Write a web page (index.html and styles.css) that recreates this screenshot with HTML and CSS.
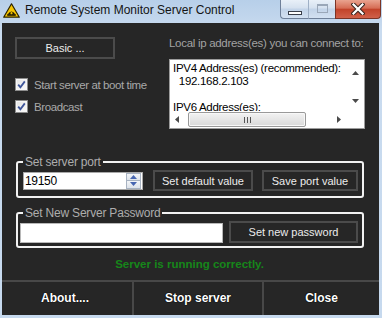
FILE: index.html
```html
<!DOCTYPE html>
<html>
<head>
<meta charset="utf-8">
<title>Remote System Monitor Server Control</title>
<link rel="stylesheet" href="styles.css">
</head>
<body>
<div class="window">
  <div class="titlebar">
    <svg class="app-icon" width="17" height="15" viewBox="0 0 17 15">
      <path d="M8.5 0.8 L16.3 14.2 L0.7 14.2 Z" fill="#f6c500" stroke="#2b2400" stroke-width="1.2" stroke-linejoin="round"/>
      <path d="M4.6 11.6 Q8.5 5.4 12.4 11.6 Z" fill="#1f1a00"/>
      <rect x="4.2" y="11.2" width="8.6" height="1.6" fill="#1f1a00"/>
      <circle cx="8.5" cy="10.2" r="1.1" fill="#f6c500"/>
    </svg>
    <span class="title">Remote System Monitor Server Control</span>
    <div class="caption">
      <div class="cbtn cmin"><span class="min-glyph"></span></div>
      <div class="cbtn cmax"><span class="max-glyph"></span></div>
      <div class="cbtn cclose">
        <svg width="14" height="12" viewBox="0 0 14 12">
          <path d="M2.5 1.5 L11.5 10.5 M11.5 1.5 L2.5 10.5" stroke="#3a2620" stroke-width="4.2" stroke-linecap="square"/>
          <path d="M2.5 1.5 L11.5 10.5 M11.5 1.5 L2.5 10.5" stroke="#ffffff" stroke-width="2.2" stroke-linecap="square"/>
        </svg>
      </div>
    </div>
  </div>
  <div class="client">
    <div class="top">
      <div class="left-col">
        <button class="btn btn-basic">Basic ...</button>
        <label class="check">
          <span class="box"><svg width="9" height="9" viewBox="0 0 9 9"><path d="M1.2 4.6 L3.4 7.2 L7.8 1.4" fill="none" stroke="#3e559a" stroke-width="1.8"/></svg></span>
          <span class="check-text">Start server at boot time</span>
        </label>
        <label class="check">
          <span class="box"><svg width="9" height="9" viewBox="0 0 9 9"><path d="M1.2 4.6 L3.4 7.2 L7.8 1.4" fill="none" stroke="#3e559a" stroke-width="1.8"/></svg></span>
          <span class="check-text">Broadcast</span>
        </label>
      </div>
      <div class="right-col">
        <div class="ip-label">Local ip address(es) you can connect to:</div>
        <div class="listbox">
          <div class="list-content">IPV4 Address(es) (recommended):
  192.168.2.103

IPV6 Address(es):</div>
          <div class="vscroll">
            <svg width="7" height="4" viewBox="0 0 7 4"><path d="M3.5 0 L7 4 L0 4 Z" fill="#4a4a4a"/></svg>
            <svg width="7" height="4" viewBox="0 0 7 4"><path d="M0 0 L7 0 L3.5 4 Z" fill="#4a4a4a"/></svg>
          </div>
          <div class="hscroll">
            <svg width="4" height="7" viewBox="0 0 4 7"><path d="M4 0 L4 7 L0 3.5 Z" fill="#4a4a4a"/></svg>
            <div class="thumb"><span class="grip"></span></div>
            <svg width="4" height="7" viewBox="0 0 4 7"><path d="M0 0 L4 3.5 L0 7 Z" fill="#4a4a4a"/></svg>
          </div>
          <div class="corner"></div>
        </div>
      </div>
    </div>

    <fieldset class="group group-port">
      <legend>Set server port</legend>
      <div class="row row-port">
        <div class="numeric">
          <span class="num-value">19150</span>
          <div class="spin">
            <span class="spin-btn"><svg width="7" height="4" viewBox="0 0 7 4"><path d="M3.5 0 L7 4 L0 4 Z" fill="#4766b0"/></svg></span>
            <span class="spin-btn"><svg width="7" height="4" viewBox="0 0 7 4"><path d="M0 0 L7 0 L3.5 4 Z" fill="#4766b0"/></svg></span>
          </div>
        </div>
        <button class="btn btn-default">Set default value</button>
        <button class="btn btn-save">Save port value</button>
      </div>
    </fieldset>

    <fieldset class="group group-pass">
      <legend>Set New Server Password</legend>
      <div class="row row-pass">
        <div class="textbox"></div>
        <button class="btn btn-pass">Set new password</button>
      </div>
    </fieldset>

    <div class="status">Server is running correctly.</div>

    <div class="bottombar">
      <button class="bbtn bbtn-about">About....</button>
      <button class="bbtn bbtn-stop">Stop server</button>
      <button class="bbtn bbtn-close">Close</button>
    </div>
  </div>
</div>
</body>
</html>
```

FILE: styles.css
```css
* { box-sizing: border-box; }

html, body {
  margin: 0;
  padding: 0;
}

body {
  width: 382px;
  height: 318px;
  overflow: hidden;
  font-family: "Liberation Sans", Arial, sans-serif;
  font-size: 11px;
}

.window {
  width: 382px;
  height: 318px;
  display: flex;
  flex-direction: column;
  background: linear-gradient(180deg, #b7cfe9 0px, #c9dbef 30px, #c6d9ee 100%);
  padding: 0 3px 3px 2px;
}

/* ---------- title bar ---------- */
.titlebar {
  height: 23px;
  display: flex;
  align-items: flex-start;
  margin-right: -2px;
  flex-shrink: 0;
}

.app-icon {
  margin: 3px 0 0 1px;
  flex-shrink: 0;
}

.title {
  margin: 3px 0 0 5px;
  font-size: 12px;
  line-height: 15px;
  color: #141414;
  flex: 1;
  white-space: nowrap;
}

.caption {
  display: flex;
  height: 19px;
}

.cbtn {
  height: 19px;
  display: flex;
  align-items: center;
  justify-content: center;
  border: 1px solid #6f8099;
  border-top: none;
}

.cmin {
  width: 28px;
  border-radius: 0 0 0 4px;
  border-right: none;
  background: linear-gradient(180deg, #e9f0f8 0%, #d5e1ef 45%, #c2d3e8 50%, #d3e1f1 100%);
  align-items: flex-end;
  padding-bottom: 3px;
}

.min-glyph {
  width: 14px;
  height: 4px;
  background: #ffffff;
  border: 1px solid #3a3f4a;
}

.cmax {
  width: 27px;
  border-right: none;
  background: linear-gradient(180deg, #e9f0f8 0%, #d5e1ef 45%, #c2d3e8 50%, #d3e1f1 100%);
  border-left: 1px solid #9fb0c6;
}

.max-glyph {
  width: 11px;
  height: 9px;
  border: 1px solid #9aa7b8;
  border-top-width: 2px;
  background: transparent;
  margin-top: -2px;
}

.cclose {
  width: 46px;
  border-radius: 0 0 4px 0;
  background: linear-gradient(180deg, #e9a38f 0%, #d66d55 45%, #c2432a 52%, #d0614a 100%);
  border-color: #7b3426;
}

/* ---------- client area ---------- */
.client {
  flex: 1;
  background: #262626;
  display: flex;
  flex-direction: column;
  color: #e6e6e6;
}

.top {
  display: flex;
  padding: 14px 0 0 13px;
}

.left-col {
  width: 154px;
  display: flex;
  flex-direction: column;
}

.btn {
  font-family: "Liberation Sans", Arial, sans-serif;
  font-size: 11px;
  color: #ececec;
  background: #262626;
  border: 2px solid #4b4b4b;
  padding: 0;
  margin: 0;
  display: flex;
  align-items: center;
  justify-content: center;
}

.btn-basic {
  width: 100px;
  height: 22px;
  margin-bottom: 19px;
}

.check {
  display: flex;
  align-items: center;
  height: 13px;
  margin-bottom: 9px;
}

.box {
  width: 13px;
  height: 13px;
  border: 1px solid #8d8d8d;
  background: linear-gradient(135deg, #e4e4e4 0%, #fbfbfb 100%);
  display: flex;
  align-items: center;
  justify-content: center;
  box-shadow: inset 0 0 0 1px #f6f6f6;
  flex-shrink: 0;
}

.check-text {
  margin-left: 6px;
  color: #a9a9a9;
  font-size: 11.5px;
  letter-spacing: -0.4px;
  white-space: nowrap;
}

.right-col {
  width: 196px;
  display: flex;
  flex-direction: column;
}

.ip-label {
  line-height: 13px;
  color: #a3a3a3;
  white-space: nowrap;
  font-size: 11.5px;
  letter-spacing: -0.3px;
}

.listbox {
  margin-top: 9px;
  height: 70px;
  border: 1px solid #9c9c9c;
  background: #ffffff;
  display: grid;
  grid-template-columns: 1fr 17px;
  grid-template-rows: 1fr 17px;
  overflow: hidden;
}

.list-content {
  white-space: pre;
  color: #000000;
  line-height: 13px;
  padding: 2px 0 0 3px;
  overflow: hidden;
  font-size: 11.5px;
  letter-spacing: -0.3px;
}

.vscroll {
  display: flex;
  flex-direction: column;
  align-items: center;
  justify-content: space-between;
  padding: 11px 0 8px 0;
}

.hscroll {
  display: flex;
  align-items: center;
  padding: 0 6px 0 5px;
  background: #ffffff;
}

.thumb {
  margin-left: 9px;
  width: 118px;
  height: 15px;
  border: 1px solid #999999;
  border-radius: 2px;
  background: linear-gradient(180deg, #f2f2f2 0%, #e6e6e6 50%, #d9d9d9 100%);
  box-shadow: inset 0 0 0 1px #f8f8f8;
  display: flex;
  align-items: center;
  justify-content: center;
  margin-right: auto;
}

.grip {
  width: 7px;
  height: 6px;
  background: repeating-linear-gradient(90deg, #555 0px, #555 1px, transparent 1px, transparent 3px);
}

.corner {
  background: #ffffff;
}

/* ---------- groups ---------- */
.group {
  margin: 0 15px 0 14px;
  padding: 0;
  border: 2px solid #f2f2f2;
  border-radius: 3px;
  min-width: 0;
}

.group legend {
  margin-left: 5px;
  padding: 0 2px;
  line-height: 14px;
  color: #adadad;
  font-size: 12px;
  letter-spacing: -0.2px;
}

.group-port {
  margin-top: 26px;
}

.group-pass {
  margin-top: 8px;
}

.row {
  display: flex;
}

.row-port {
  align-items: center;
  padding: 1px 0 5px 5px;
}

.numeric {
  width: 120px;
  height: 18px;
  background: #ffffff;
  border: 1px solid #a9a9a9;
  display: flex;
  align-items: center;
  justify-content: space-between;
  padding: 0 1px 0 1px;
}

.num-value {
  color: #000000;
  font-size: 12px;
  letter-spacing: -0.3px;
}

.spin {
  width: 15px;
  height: 16px;
  display: flex;
  flex-direction: column;
}

.spin-btn {
  flex: 1;
  border: 1px solid #a8b3c2;
  background: linear-gradient(180deg, #f3f5f8 0%, #dde3ea 100%);
  display: flex;
  align-items: center;
  justify-content: center;
}

.spin-btn + .spin-btn {
  border-top: none;
}

.btn-default {
  width: 100px;
  height: 21px;
  margin-left: 10px;
}

.btn-save {
  width: 96px;
  height: 21px;
  margin-left: 9px;
}

.row-pass {
  align-items: flex-end;
  padding: 1px 0 3px 2px;
}

.textbox {
  width: 203px;
  height: 20px;
  background: #ffffff;
  border: 1px solid #b8b8b8;
}

.btn-pass {
  width: 129px;
  height: 22px;
  margin-left: 6px;
}

/* ---------- status ---------- */
.status {
  margin-top: 10px;
  text-align: center;
  font-weight: bold;
  font-size: 11.5px;
  color: #16861a;
  line-height: 13px;
  padding-right: 2px;
}

/* ---------- bottom bar ---------- */
.bottombar {
  margin-top: auto;
  height: 35px;
  border-top: 2px solid #484848;
  display: flex;
}

.bbtn {
  font-family: "Liberation Sans", Arial, sans-serif;
  font-size: 12px;
  font-weight: bold;
  color: #ffffff;
  text-shadow: 0 0 1px #000000, 0 0 1px #000000;
  background: #262626;
  border: none;
  margin: 0;
  padding: 0 0 2px 0;
  display: flex;
  align-items: center;
  justify-content: center;
}

.bbtn-about {
  width: 132px;
  border-right: 2px solid #484848;
  padding-right: 4px;
}

.bbtn-stop {
  width: 130px;
  border-right: 2px solid #484848;
}

.bbtn-close {
  flex: 1;
}
```
